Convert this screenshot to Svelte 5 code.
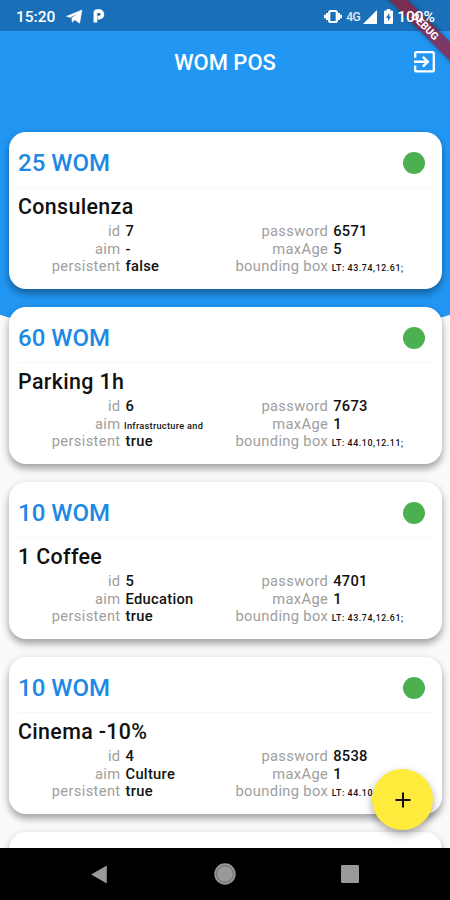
<script lang="ts">
  type Offer = {
    amount: number;
    name: string;
    id: number;
    aim: string;
    smallAim?: boolean;
    persistent: boolean;
    password: string;
    maxAge: number;
    bounds: string;
  };

  const offers: Offer[] = [
    { amount: 25, name: 'Consulenza', id: 7, aim: '-', persistent: false, password: '6571', maxAge: 5, bounds: 'LT: 43.74,12.61;' },
    { amount: 60, name: 'Parking 1h', id: 6, aim: 'Infrastructure and', smallAim: true, persistent: true, password: '7673', maxAge: 1, bounds: 'LT: 44.10,12.11;' },
    { amount: 10, name: '1 Coffee', id: 5, aim: 'Education', persistent: true, password: '4701', maxAge: 1, bounds: 'LT: 43.74,12.61;' },
    { amount: 10, name: 'Cinema -10%', id: 4, aim: 'Culture', persistent: true, password: '8538', maxAge: 1, bounds: 'LT: 44.10,12.11;' },
  ];
</script>

<div class="screen">
  <div class="backdrop"></div>

  <div class="status-bar">
    <span class="time">15:20</span>
    <svg class="telegram" width="17" height="16" viewBox="0 0 17 16">
      <path d="M0.5 7.3 16 1 13.6 14.2 8.8 10.8 6.3 13.2 5.8 9.2 12 4 4.2 8.5z" fill="#fff" stroke="#fff" stroke-width=".5" />
    </svg>
    <svg class="parking" width="12" height="15" viewBox="0 0 12 15">
      <path d="M2.4 13.6V3.6Q2.4 2.2 4 2.2H6.2a3.2 3.2 0 0 1 0 6.4H4.6" fill="none" stroke="#fff" stroke-width="3.7" />
    </svg>
    <span class="spacer"></span>
    <svg width="18" height="15" viewBox="0 0 18 15">
      <rect x="5.2" y="2" width="7.6" height="11" rx="1.6" fill="none" stroke="#fff" stroke-width="2.2" />
      <path d="M3 4v7M15 4v7M.9 5.8v3.4M17.1 5.8v3.4" stroke="#fff" stroke-width="2" />
    </svg>
    <span class="network">4G</span>
    <svg class="signal" width="14" height="14" viewBox="0 0 14 14">
      <path d="M14 0v14H0z" fill="#fff" />
    </svg>
    <svg class="battery" width="9" height="15" viewBox="0 0 9 15">
      <path d="M2.8 0h3.4v1.6H8q1 0 1 1V14q0 1-1 1H1q-1 0-1-1V2.6q0-1 1-1h1.8z" fill="#fff" />
      <path d="M5.2 4 2 9h2v3.6L7 7.4H5.2z" fill="#1b6eb5" />
    </svg>
    <span class="percent">100%</span>
  </div>

  <header class="app-bar">
    <h1>WOM POS</h1>
    <button type="button" aria-label="Exit">
      <svg width="21" height="22" viewBox="0 0 21 22">
        <path d="M1.2 6.8V2.6Q1.2 1.2 2.6 1.2H18.4Q19.8 1.2 19.8 2.6V18.9Q19.8 20.3 18.4 20.3H2.6Q1.2 20.3 1.2 18.9V14.6" fill="none" stroke="#fff" stroke-width="2.3" />
        <path d="M0 10.7H13.5M8.9 5.8l4.9 4.9-4.9 4.9" fill="none" stroke="#fff" stroke-width="2.4" />
      </svg>
    </button>
  </header>

  <main class="offers">
    {#each offers as offer (offer.id)}
      <article class="card">
        <div class="card-head">
          <h2>{offer.amount} WOM</h2>
          <span class="dot"></span>
        </div>
        <h3>{offer.name}</h3>
        <div class="details">
          <dl>
            <dt>id</dt>
            <dd>{offer.id}</dd>
            <dt>aim</dt>
            <dd class:small={offer.smallAim}>{offer.aim}</dd>
            <dt>persistent</dt>
            <dd>{offer.persistent}</dd>
          </dl>
          <dl>
            <dt>password</dt>
            <dd>{offer.password}</dd>
            <dt>maxAge</dt>
            <dd>{offer.maxAge}</dd>
            <dt>bounding box</dt>
            <dd class="small bounds">{offer.bounds}</dd>
          </dl>
        </div>
      </article>
    {/each}
    <article class="card"></article>
  </main>

  <nav class="nav-bar">
    <svg width="16" height="19" viewBox="0 0 16 19"><path d="M15.8.5v18L.2 9.5z" fill="#999" /></svg>
    <svg width="22" height="22" viewBox="0 0 22 22">
      <circle cx="11" cy="11" r="10" fill="#8f8f8f" stroke="#999" stroke-width="1.4" />
      <circle cx="11" cy="11" r="8.3" fill="#999" stroke="#666" stroke-width=".8" />
    </svg>
    <svg width="18" height="18" viewBox="0 0 18 18"><rect width="18" height="18" rx="1.2" fill="#999" /></svg>
  </nav>

  <button class="fab" type="button" aria-label="Add">
    <svg width="16" height="16" viewBox="0 0 16 16"><path d="M8 .5v15M.5 8h15" stroke="#111" stroke-width="2" /></svg>
  </button>

  <div class="ribbon">DEBUG</div>
</div>

<style>
  :global(body) {
    margin: 0;
  }
  .screen {
    position: relative;
    display: flex;
    flex-direction: column;
    width: 450px;
    height: 900px;
    overflow: hidden;
    background: #fafafa;
    font-family: Roboto, 'Liberation Sans', sans-serif;
  }
  h1, h2, h3, dl, dd {
    margin: 0;
    font-weight: 500;
  }
  button {
    display: flex;
    padding: 0;
    border: none;
    background: none;
  }
  .backdrop {
    position: absolute;
    top: 0;
    left: -30px;
    right: -30px;
    height: 338px;
    background: linear-gradient(#1a70b8 31px, #2196f3 31px);
    border-radius: 0 0 50% 50% / 0 0 44px 44px;
  }
  /* system icons stay above the debug ribbon */
  .status-bar {
    position: relative;
    z-index: 2;
    display: flex;
    align-items: center;
    flex: none;
    box-sizing: border-box;
    height: 31px;
    padding: 2px 15px 0 16px;
    color: #fff;
    font-size: 15.5px;
    font-weight: 500;
  }
  .telegram {
    margin-left: 11px;
  }
  .parking {
    margin-left: 10px;
  }
  .spacer {
    flex: 1;
  }
  .network {
    margin-left: 4px;
    font-size: 12px;
    font-weight: 500;
    letter-spacing: -0.5px;
    opacity: 0.85;
  }
  .signal {
    margin-left: 3px;
  }
  .battery {
    margin: 0 4px 0 7px;
  }
  .app-bar {
    position: relative;
    display: flex;
    align-items: center;
    justify-content: center;
    flex: none;
    height: 62px;
  }
  .app-bar h1 {
    color: #fff;
    font-size: 22px;
  }
  .app-bar button {
    position: absolute;
    right: 15px;
  }
  .offers {
    position: relative;
    display: flex;
    flex: 1;
    flex-direction: column;
    gap: 17.5px;
    min-height: 0;
    overflow: hidden;
    padding: 38.5px 8.5px 0 9px;
  }
  .card {
    flex: none;
    box-sizing: border-box;
    height: 157.5px;
    padding: 7px 9px;
    border-radius: 17px;
    background: #fff;
    box-shadow: 0 5px 7px rgba(0, 0, 0, 0.28), 0 2px 10px rgba(0, 0, 0, 0.12);
  }
  .card-head {
    display: flex;
    align-items: center;
    justify-content: space-between;
    box-sizing: border-box;
    height: 49px;
    padding-right: 8px;
    border-bottom: 1px solid #f7f7f7;
  }
  .card-head h2 {
    color: #1e88e5;
    font-size: 24px;
  }
  .dot {
    width: 22px;
    height: 22px;
    border-radius: 50%;
    background: #4caf50;
  }
  h3 {
    margin-top: 6px;
    color: #111;
    font-size: 21.4px;
    line-height: 26px;
    letter-spacing: 0.35px;
  }
  .details {
    display: grid;
    grid-template-columns: 1fr 1fr;
    margin: 3.9px -2px 0 1.2px;
  }
  dl {
    display: grid;
    grid-template-columns: 1fr 1fr;
    grid-auto-rows: 17.5px;
    column-gap: 5px;
    font-size: 14.7px;
    line-height: 17.5px;
    white-space: nowrap;
  }
  dt {
    color: #9e9e9e;
    font-weight: 400;
    letter-spacing: 0.35px;
    text-align: right;
  }
  dd {
    color: #111;
    letter-spacing: 0.3px;
  }
  .small {
    margin-left: -1.5px;
    font-size: 9.2px;
    line-height: 20px;
  }
  .bounds {
    font-size: 8.8px;
    letter-spacing: 0.6px;
  }
  .nav-bar {
    position: relative;
    display: flex;
    align-items: center;
    justify-content: space-between;
    flex: none;
    box-sizing: border-box;
    height: 52px;
    padding: 0 91px;
    background: #000;
  }
  .nav-bar svg:nth-child(2) {
    margin-left: 2px;
  }
  .fab {
    position: absolute;
    top: 769px;
    left: 372px;
    align-items: center;
    justify-content: center;
    width: 61px;
    height: 61px;
    border-radius: 50%;
    background: #ffeb3b;
    box-shadow: 0 4px 8px rgba(0, 0, 0, 0.35);
  }
  .ribbon {
    position: absolute;
    z-index: 1;
    top: 19.5px;
    left: 364.5px;
    width: 120px;
    height: 13px;
    transform: rotate(45deg);
    background: rgba(160, 20, 45, 0.72);
    box-shadow: 0 0 5px rgba(0, 0, 0, 0.4);
    color: #fff;
    font-size: 10.5px;
    font-weight: 700;
    line-height: 13px;
    text-align: center;
  }
</style>
